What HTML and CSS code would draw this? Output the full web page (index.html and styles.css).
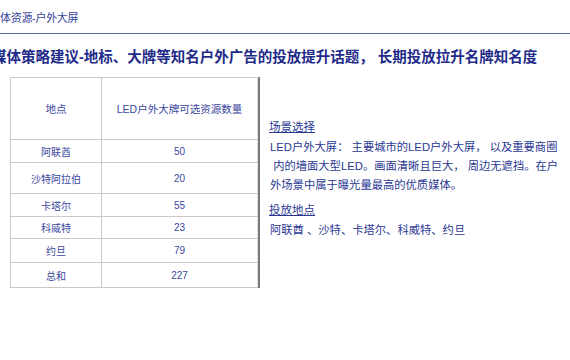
FILE: index.html
```html
<!DOCTYPE html>
<html lang="zh">
<head>
<meta charset="utf-8">
<link rel="stylesheet" href="styles.css">
</head>
<body>
<div class="page">
  <header class="topbar"><span class="crumb">体资源-户外大屏</span></header>
  <h1 class="title"><span class="title-text">媒体策略建议-地标、大牌等知名户外广告的投放提升话题， 长期投放拉升名牌知名度</span></h1>
  <main class="content">
    <div class="table-wrap">
      <table class="data">
        <thead>
          <tr><th class="c1">地点</th><th class="c2">LED户外大牌可选资源数量</th></tr>
        </thead>
        <tbody>
          <tr class="r1"><td>阿联酋</td><td>50</td></tr>
          <tr class="r2"><td>沙特阿拉伯</td><td>20</td></tr>
          <tr class="r3"><td>卡塔尔</td><td>55</td></tr>
          <tr class="r4"><td>科威特</td><td>23</td></tr>
          <tr class="r5"><td>约旦</td><td>79</td></tr>
          <tr class="r6"><td>总和</td><td>227</td></tr>
        </tbody>
      </table>
    </div>
    <section class="notes">
      <h2 class="label">场景选择</h2>
      <p class="para">LED户外大屏： 主要城市的LED户外大屏， 以及重要商圈<br>&nbsp;内的墙面大型LED。画面清晰且巨大， 周边无遮挡。在户<br>外场景中属于曝光量最高的优质媒体。</p>
      <h2 class="label label2">投放地点</h2>
      <p class="para">阿联酋 、沙特、卡塔尔、科威特、约旦</p>
    </section>
  </main>
</div>
</body>
</html>
```

FILE: styles.css
```css
* { box-sizing: border-box; }
html, body { margin: 0; padding: 0; background: #fff; }
body {
  font-family: "Liberation Sans", "Noto Sans CJK SC", sans-serif;
  color: #2b3893;
  width: 570px;
  height: 360px;
  overflow: hidden;
}
.page { width: 570px; }
.topbar {
  height: 34px;
  border-bottom: 1px solid #5d68b3;
  display: flex;
  align-items: center;
  padding-top: 1px;
}
.crumb {
  font-size: 11px;
  color: #38449a;
  margin-left: 0;
  letter-spacing: -0.3px;
}
.title {
  margin: 0;
  height: 43px;
  display: flex;
  align-items: center;
  overflow: hidden;
  padding-bottom: 1px;
}
.title-text {
  font-size: 14.5px;
  font-weight: bold;
  color: #1f2b88;
  margin-left: -8px;
  white-space: nowrap;
}
.content {
  display: flex;
  align-items: flex-start;
  padding-left: 10px;
}
.table-wrap {
  border-right: 2px solid #7a7a7a;
}
.data {
  border-collapse: collapse;
  width: 248px;
  font-size: 10px;
  color: #3b47a0;
}
.data th, .data td {
  border: 1px solid #c9c9c9;
  text-align: center;
  padding: 0;
  font-weight: normal;
}
.data th { height: 62px; font-size: 10.5px; }
.data .c1 { width: 91px; }
.r1 td { height: 23px; }
.r2 td { height: 31px; }
.r3 td { height: 23px; }
.r4 td { height: 22px; }
.r5 td { height: 24px; }
.r6 td { height: 25px; }
.data td:last-child, .data th:last-child { border-right-color: #e0e0e0; }
.notes {
  margin-left: 9px;
  padding-top: 42px;
  width: 300px;
}
.label {
  margin: 0;
  font-size: 11.5px;
  font-weight: normal;
  text-decoration: underline;
  color: #2b3893;
  line-height: 16px;
}
.para {
  margin: 3px 0 0 1px;
  font-size: 11.3px;
  line-height: 19px;
  color: #2b3893;
  white-space: nowrap;
}
.label2 { margin-top: 7px; }
```
